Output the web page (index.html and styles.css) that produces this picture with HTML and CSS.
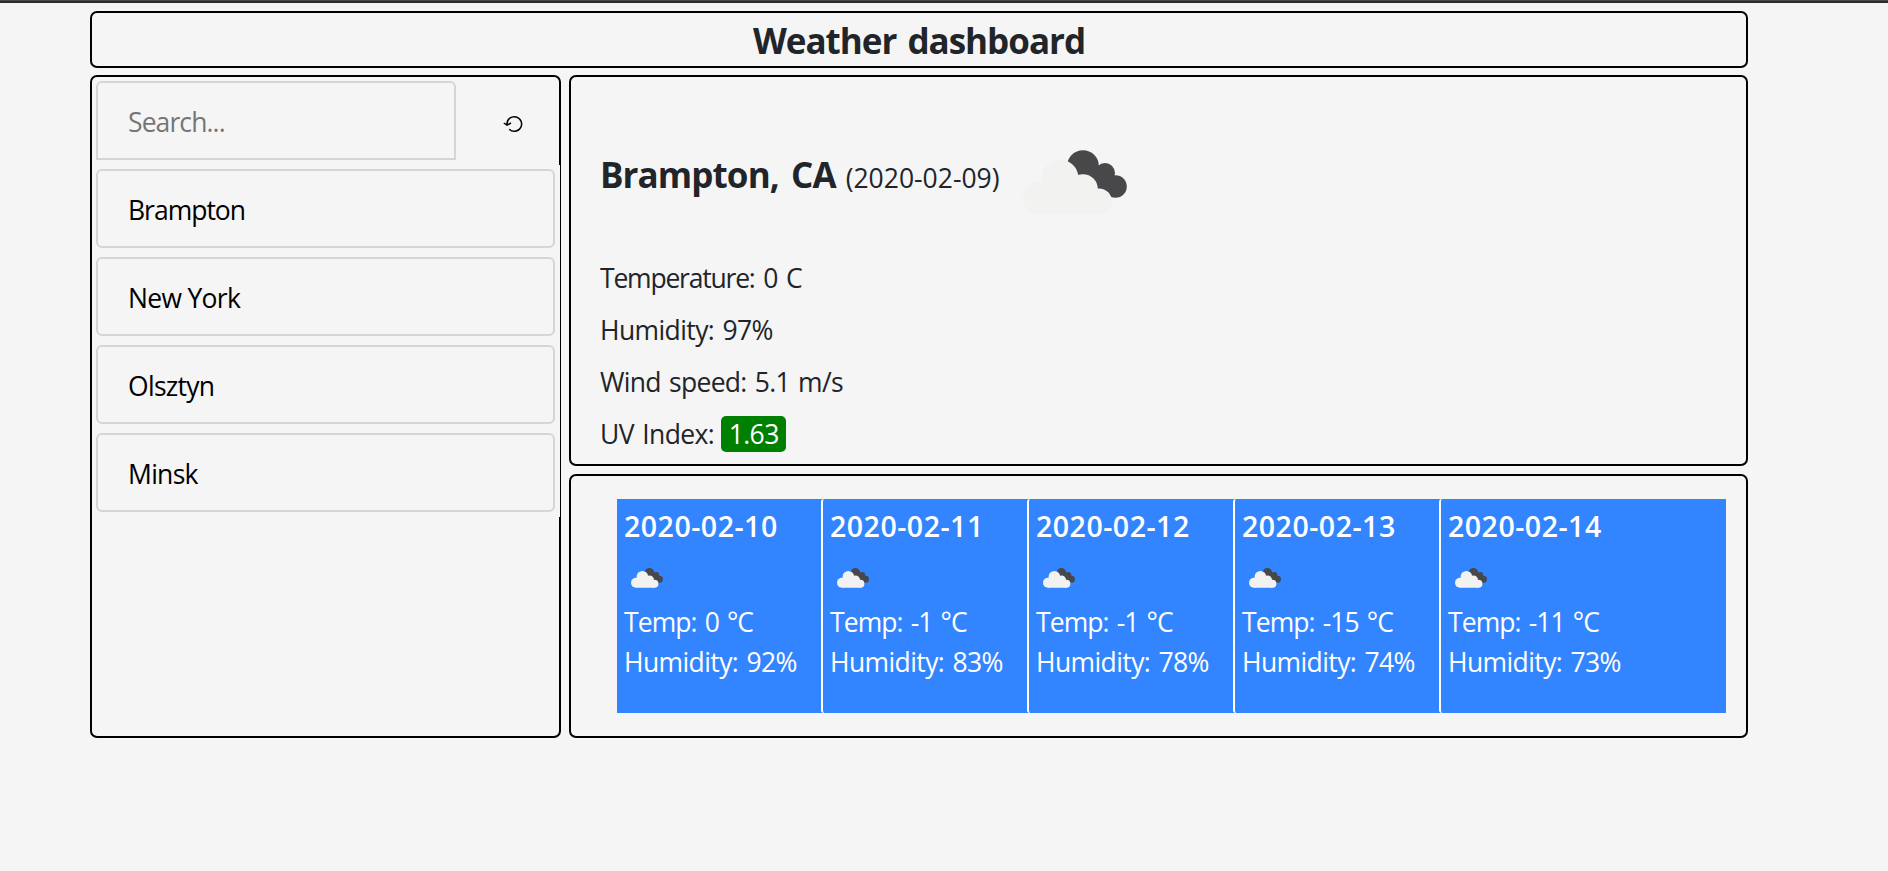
FILE: index.html
```html
<!DOCTYPE html>
<html lang="en">
<head>
<meta charset="utf-8">
<title>Weather dashboard</title>
<link rel="stylesheet" href="styles.css">
</head>
<body>
<svg class="defs" aria-hidden="true">
  <symbol id="clouds" viewBox="0 0 104 65">
    <g fill="#48484a">
      <circle cx="60" cy="16" r="15.800"/>
      <circle cx="82" cy="23" r="10"/>
      <circle cx="92.500" cy="36.500" r="11.300"/>
      <path d="M60 16L82 23L90 36L86 46L62 34Z"/>
    </g>
    <g fill="#f2f2f0">
      <circle cx="16" cy="48" r="16"/>
      <circle cx="37" cy="28" r="18.500"/>
      <circle cx="60" cy="39" r="14.800"/>
      <circle cx="76" cy="51.500" r="13"/>
      <path d="M16 64.300L16 32L37 28L60 38L76 50V64.300Z"/>
    </g>
  </symbol>
</svg>
<div class="topline"></div>
<main class="dashboard">
  <header class="panel title"><h1>Weather dashboard</h1></header>
  <div class="columns">
    <aside class="panel sidebar">
      <form class="search">
        <input class="search-input" type="text" placeholder="Search...">
        <button class="refresh" type="button" aria-label="Refresh">
          <svg width="20" height="18" viewBox="0 0 20 18" fill="none" stroke="#000" stroke-width="1.5"><path d="M4 9A7.300 7.300 0 1 1 6.200 14.200M.8 8l3.200 2.200L8 8"/></svg>
        </button>
      </form>
      <div class="cities">
        <button class="city">Brampton</button>
        <button class="city">New York</button>
        <button class="city">Olsztyn</button>
        <button class="city">Minsk</button>
      </div>
    </aside>
    <div class="content">
      <section class="panel current">
        <div class="place"><h2>Brampton, CA</h2><span class="date">(2020-02-09)</span><svg class="icon-large"><use href="#clouds"/></svg></div>
        <p class="temperature">Temperature: 0 C</p>
        <p>Humidity: 97%</p>
        <p class="wind">Wind speed: 5.1 m/s</p>
        <p>UV Index:<span class="uv">1.63</span></p>
      </section>
      <section class="panel forecast">
        <div class="days">
          <article class="day"><h3>2020-02-10</h3><svg class="icon-small"><use href="#clouds"/></svg><p class="temp">Temp: 0 °C</p><p>Humidity: 92%</p></article>
          <article class="day"><h3>2020-02-11</h3><svg class="icon-small"><use href="#clouds"/></svg><p class="temp">Temp: -1 °C</p><p>Humidity: 83%</p></article>
          <article class="day"><h3>2020-02-12</h3><svg class="icon-small"><use href="#clouds"/></svg><p class="temp">Temp: -1 °C</p><p>Humidity: 78%</p></article>
          <article class="day"><h3>2020-02-13</h3><svg class="icon-small"><use href="#clouds"/></svg><p class="temp">Temp: -15 °C</p><p>Humidity: 74%</p></article>
          <article class="day"><h3>2020-02-14</h3><svg class="icon-small"><use href="#clouds"/></svg><p class="temp">Temp: -11 °C</p><p>Humidity: 73%</p></article>
        </div>
      </section>
    </div>
  </div>
</main>
</body>
</html>
```
FILE: styles.css
```css
* { box-sizing: border-box; margin: 0; padding: 0; }
body {
  background: #f5f5f5;
  color: #212529;
  font: 26.5px/40px "Open Sans", "Noto Sans", sans-serif;
  letter-spacing: -0.6px;
  word-spacing: 1px;
}
.defs { display: none; }
.topline { height: 3px; background: #4a4a4a; border-bottom: 2px solid #2b2b2b; }
.dashboard { width: 1658px; margin: 8px 0 0 90px; }
.panel { border: 2px solid #000; border-radius: 7px; }
.title { height: 57px; text-align: center; }
.title h1 { font-size: 35px; line-height: 55px; font-weight: 700; letter-spacing: -1px; word-spacing: 3px; }
.columns { display: flex; gap: 8px; margin-top: 7px; height: 663px; }
.sidebar { width: 471px; padding-top: 4px; }
.search { display: flex; height: 79px; margin-left: 4px; }
.search-input {
  width: 360px; height: 79px; padding: 3px 30px 0; background: transparent;
  border: 2px solid #d5d5d5; border-radius: 6px 6px 0 0;
  font: inherit; letter-spacing: -0.9px; color: #000;
}
.search-input::placeholder { color: #757575; opacity: 1; }
.refresh { width: 99px; padding: 9px 0 0 15px; border: 0; background: none; }
.cities {
  display: flex; flex-direction: column; gap: 9px; height: 352px; margin: 5px -1px 0 0;
  padding: 4px 5px 0 4px; background: #f5f5f5;
}
.city {
  height: 79px; flex: none; padding: 3px 30px 0; background: transparent; text-align: left;
  border: 2px solid #d5d5d5; border-radius: 6px;
  font: inherit; letter-spacing: -0.7px; color: #000;
}
.city:first-child { letter-spacing: -1px; }
.content { display: flex; flex-direction: column; gap: 8px; width: 1179px; }
.current { height: 391px; padding: 47px 30px 0 29px; }
.current p { height: 36px; margin-bottom: 16px; line-height: 37px; word-spacing: 2px; }
.current .temperature { letter-spacing: -1.2px; word-spacing: 3px; }
.current .wind { letter-spacing: -0.7px; }
.place { display: flex; align-items: baseline; height: 136px; line-height: 102px; }
.place h2 { font-size: 35px; letter-spacing: -0.9px; word-spacing: 4px; margin-right: 10px; }
.date { width: 154px; letter-spacing: 0; white-space: nowrap; }
.icon-large { width: 104px; height: 65px; align-self: flex-start; margin: 26px 0 0 23px; }
.uv {
  display: inline-block; width: 65px; height: 36px; margin-left: 7px; line-height: 37px;
  background: #008000; border-radius: 5px; color: #fff; text-align: center;
}
.forecast { height: 264px; padding: 23px 20px 0 46px; }
.days { display: flex; height: 214px; background: #3385ff; color: #fff; }
.day { width: 206px; padding: 7px 0 0 7px; border-left: 2px solid #fff; border-radius: 3px; }
.day:first-child { width: 204px; border-left: 0; }
.day h3 { font-size: 28.5px; line-height: 40px; font-weight: 600; white-space: nowrap; letter-spacing: 0.5px; }
.day p { white-space: nowrap; word-spacing: 2px; }
.day .temp { letter-spacing: -0.9px; }
.icon-small { display: block; width: 32px; height: 20px; margin: 22px 0 14px 7px; }
```
